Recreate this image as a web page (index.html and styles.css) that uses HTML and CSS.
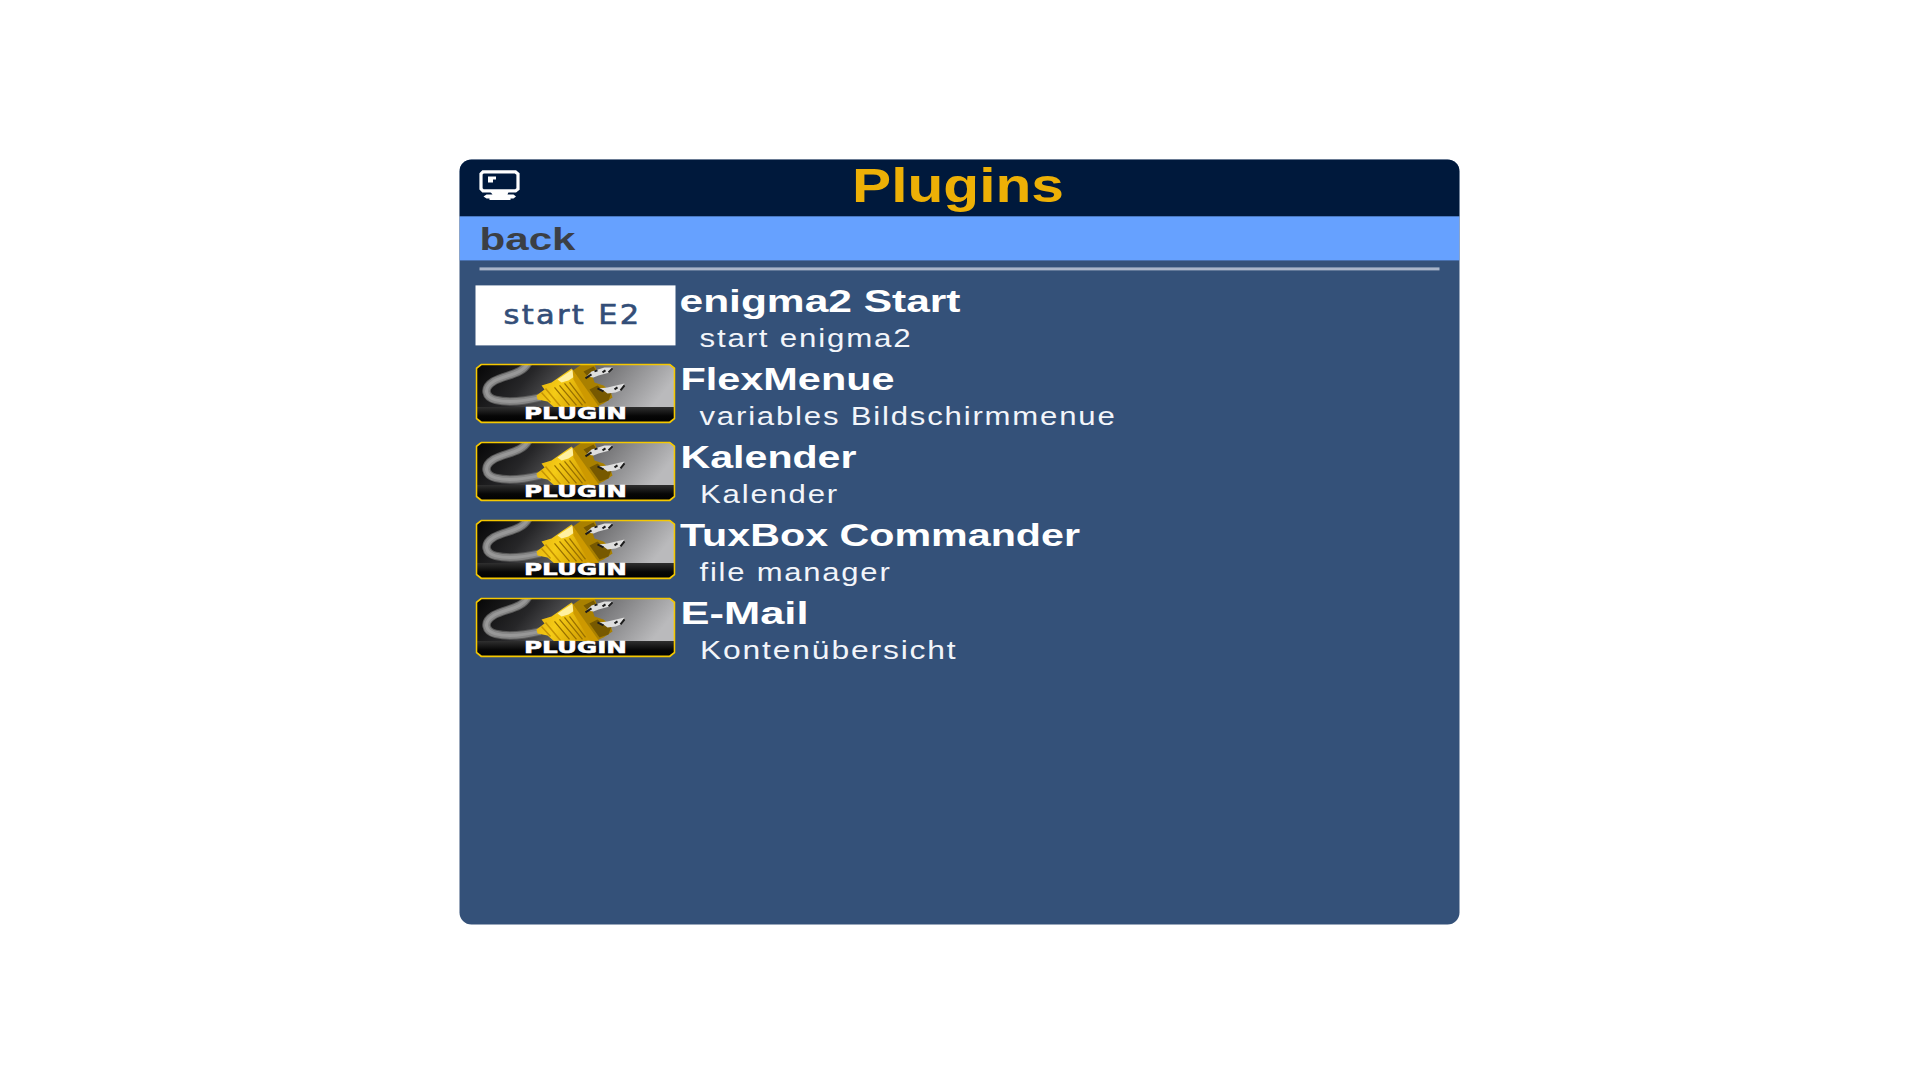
FILE: index.html
```
<!DOCTYPE html>
<html lang="en">
<head>
<meta charset="utf-8">
<title>Plugins</title>
<link rel="stylesheet" href="styles.css">
</head>
<body>
<svg class="defs" width="0" height="0" aria-hidden="true">
  <defs>
    <linearGradient id="backdrop" x1="0" y1="0" x2="1" y2="0.25">
      <stop offset="0" stop-color="#050505"/><stop offset=".3" stop-color="#262628"/><stop offset=".62" stop-color="#707072"/><stop offset="1" stop-color="#bababc"/>
    </linearGradient>
    <linearGradient id="strip" x1="0" y1="0" x2="0" y2="1">
      <stop offset="0" stop-color="#303030"/><stop offset=".55" stop-color="#070707"/><stop offset="1" stop-color="#000"/>
    </linearGradient>
    <linearGradient id="brass" x1="0" y1="0" x2="1" y2="0.3">
      <stop offset="0" stop-color="#e0ad0a"/><stop offset=".45" stop-color="#f5cb16"/><stop offset="1" stop-color="#d09c00"/>
    </linearGradient>
    <clipPath id="frame"><path d="M6 .5H194L199.500 5V55L194 59.500H6L.5 55V5Z"/></clipPath>
    <symbol id="plug" viewBox="0 0 200 60">
      <g clip-path="url(#frame)">
        <path fill="url(#backdrop)" d="M0 0H200V60H0Z"/>
        <path class="cable-edge" d="M53 -1C46 12 30 11 18 18C7 25 10 34 20 36.500C34 40 48 38 65 34"/>
        <path class="cable" d="M53 -1C46 12 30 11 18 18C7 25 10 34 20 36.500C34 40 48 38 65 34"/>
        <path class="cable-light" d="M53 -1C46 12 30 11 18 18C7 25 10 34 20 36.500C34 40 48 38 65 34"/>
        <path fill="#a98000" d="M96 8L106 1H119L121 6L117 13L119 19L128 22L135 28L137 34L128 40L119 44H105Z"/>
        <path fill="#775900" d="M114 26L122 22L128 27L136 29L133 37L124 40ZM108 8L118 3L120 6L113 14Z"/>
        <path fill="url(#brass)" d="M61 32L69 26L66 22L76 19L96 5L122 44H79L72 38L62 36Z"/>
        <path fill="#fff0a0" d="M82 16L97 6L99 13L93 17L86 19Z"/>
        <path fill="#cd9900" d="M97 6L124 44H115L98 16Z"/>
        <path stroke="#987000" stroke-width="1.300" d="M79 24L94 42M84 22L101 42M89 20L107 42M94 19L110 40"/>
        <path stroke="#c59404" stroke-width="1.500" d="M66 29L75 39M70 25L85 43"/>
        <path fill="#dedede" d="M111 13L116 8L129 4H137L134 9L123 12L118 14ZM123 25L132 24L149 20L145 27L140 29L132 30L128 27Z"/>
        <path stroke="#1c1c1c" stroke-width="2" d="M110 15L116 11M119 8L122 7M127 9L130 7M122 25L128 28M139 26L142 24M145 27L149 22M133 9L137 5"/>
        <path fill="url(#strip)" d="M0 43.500H200V60H0Z"/>
      </g>
      <path fill="none" stroke="#f5c800" stroke-width="1.800" d="M6 .9H194L199.100 5V55L194 59.100H6L.9 55V5Z"/>
      <text class="plug-label" x="48.500" y="56" textLength="103" lengthAdjust="spacingAndGlyphs">PLUGIN</text>
    </symbol>
  </defs>
</svg>
<main class="panel">
  <header class="header">
    <svg class="monitor" width="42" height="32" viewBox="0 0 42 32">
      <path fill="none" stroke="#fff" stroke-width="3.200" d="M3.500 2.500H36L38.500 4.500V19.500L36 21.500H3.500L1.500 19.500V4.500Z"/>
      <path fill="#fff" d="M8.500 7H16.500V10H13.500V13H8.500ZM11 22.500H29L28 25H34L36.500 27L34 29H31V30.500H10V29H7L4 27L7 25H13Z"/>
    </svg>
    <svg class="heading" width="230" height="57"><text x="11.500" y="43" textLength="212" lengthAdjust="spacingAndGlyphs">Plugins</text></svg>
  </header>
  <div class="back"><svg width="140" height="44"><text x="0" y="34" textLength="96" lengthAdjust="spacingAndGlyphs">back</text></svg></div>
  <hr class="rule">
  <ul class="list">
    <li class="row">
      <svg class="thumb" width="200" height="60"><rect width="200" height="60" fill="#fff"/><text class="e2" x="28" y="38.500" textLength="138" lengthAdjust="spacingAndGlyphs">start E2</text></svg>
      <div class="texts">
        <svg class="name" width="600" height="39"><text x="4" y="27" textLength="281" lengthAdjust="spacingAndGlyphs">enigma2 Start</text></svg>
        <svg class="desc" width="600" height="39"><text x="24" y="23" textLength="213" lengthAdjust="spacingAndGlyphs">start enigma2</text></svg>
      </div>
    </li>
    <li class="row">
      <svg class="thumb" width="200" height="60"><use href="#plug"/></svg>
      <div class="texts">
        <svg class="name" width="600" height="39"><text x="5" y="27" textLength="214" lengthAdjust="spacingAndGlyphs">FlexMenue</text></svg>
        <svg class="desc" width="600" height="39"><text x="24" y="23" textLength="417" lengthAdjust="spacingAndGlyphs">variables Bildschirmmenue</text></svg>
      </div>
    </li>
    <li class="row">
      <svg class="thumb" width="200" height="60"><use href="#plug"/></svg>
      <div class="texts">
        <svg class="name" width="600" height="39"><text x="5" y="27" textLength="176" lengthAdjust="spacingAndGlyphs">Kalender</text></svg>
        <svg class="desc" width="600" height="39"><text x="24.500" y="23" textLength="139" lengthAdjust="spacingAndGlyphs">Kalender</text></svg>
      </div>
    </li>
    <li class="row">
      <svg class="thumb" width="200" height="60"><use href="#plug"/></svg>
      <div class="texts">
        <svg class="name" width="600" height="39"><text x="4.500" y="27" textLength="400" lengthAdjust="spacingAndGlyphs">TuxBox Commander</text></svg>
        <svg class="desc" width="600" height="39"><text x="24" y="23" textLength="192" lengthAdjust="spacingAndGlyphs">file manager</text></svg>
      </div>
    </li>
    <li class="row">
      <svg class="thumb" width="200" height="60"><use href="#plug"/></svg>
      <div class="texts">
        <svg class="name" width="600" height="39"><text x="5" y="27" textLength="128" lengthAdjust="spacingAndGlyphs">E-Mail</text></svg>
        <svg class="desc" width="600" height="39"><text x="24.500" y="23" textLength="257.500" lengthAdjust="spacingAndGlyphs">Kontenübersicht</text></svg>
      </div>
    </li>
  </ul>
</main>
</body>
</html>
```
FILE: styles.css
```
* { box-sizing: border-box; }
body {
  margin: 0;
  height: 1080px;
  padding-top: 159px;
  background: #fff;
  font-family: "Liberation Sans", Arial, sans-serif;
  overflow: hidden;
}
svg { display: block; flex: none; overflow: visible; }
.defs { height: 0; }
.panel {
  width: 1000px;
  height: 765px;
  margin: 0 auto;
  transform: translate(-0.5px, 0.4px);
  background: #345179;
  border-radius: 12px;
  overflow: hidden;
}
.header {
  display: grid;
  grid-template-columns: 385px 1fr;
  height: 57px;
  background: #00193c;
}
.monitor { margin: 10px 0 0 20px; }
.heading { fill: #edb006; font-size: 48px; font-weight: bold; margin-left: -4px; }
.back {
  height: 44px;
  padding-left: 20px;
  background: #66a1ff;
  fill: #3b3f45;
  font-size: 31px;
  font-weight: bold;
}
.rule {
  width: 960px;
  height: 3px;
  margin: 7px auto 15px 20px;
  border: 0;
  background: #a9b5c9;
}
.list { list-style: none; margin: 0; padding: 0 0 0 16px; }
.row { display: flex; height: 78px; }
.texts { display: flex; flex-direction: column; }
.name { fill: #fff; font-size: 32px; font-weight: bold; }
.desc { fill: #f2f5fa; font-size: 26px; letter-spacing: 1.5px; }
.e2 {
  fill: #334e78;
  stroke: #334e78;
  stroke-width: 0.6px;
  font-family: "DejaVu Sans", sans-serif;
  font-size: 26px;
  letter-spacing: 2px;
}
.plug-label {
  fill: #fff;
  stroke: #fff;
  stroke-width: 0.5px;
  font-family: "DejaVu Sans", sans-serif;
  font-size: 15.5px;
  font-weight: bold;
}
.cable, .cable-edge, .cable-light { fill: none; }
.cable-edge { stroke: #5a5a5a; stroke-width: 8.5px; }
.cable { stroke: #858585; stroke-width: 6.5px; }
.cable-light { stroke: #989898; stroke-width: 3px; }
```
